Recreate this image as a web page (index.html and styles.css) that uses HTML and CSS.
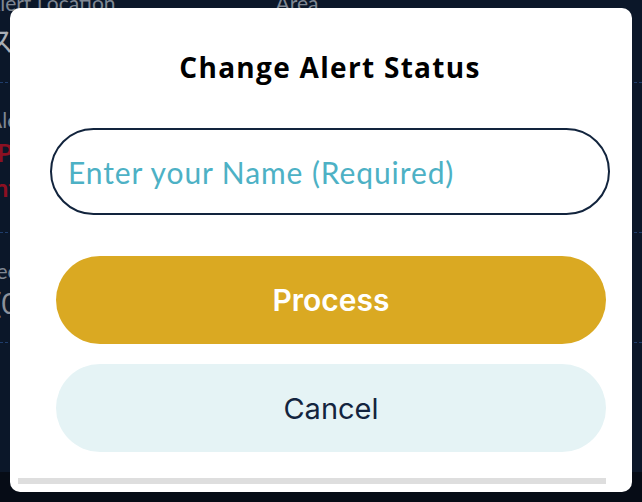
FILE: index.html
```html
<!DOCTYPE html>
<html lang="ja">
<head>
  <meta charset="UTF-8" />
  <title>Change Alert Status</title>
  <link rel="stylesheet" href="styles.css">
</head>
<body>
  <div class="page">
    <!-- DETAIL BEHIND THE DIALOG -->
    <div class="detail">
      <div class="row row-first">
        <div class="cols">
          <p class="label">Alert Location</p>
          <p class="label label-area">Area</p>
        </div>
        <p class="value">スーパー</p>
      </div>
      <div class="row row-status">
        <p class="label">Alert Status</p>
        <p class="value red">
          <span class="line">Processing</span>
          <span class="line line-two">Interrupted</span>
        </p>
      </div>
      <div class="row row-time">
        <p class="label">Received</p>
        <p class="value">(09:41)</p>
      </div>
    </div>
    <div class="tabbar"></div>
  </div>

  <!-- DIALOG -->
  <div class="modal">
    <div class="modal-body">
      <h2 class="modal-title">Change Alert Status</h2>
      <input type="text" class="name-input" placeholder="Enter your Name (Required)">
      <button class="btn btn-process">Process</button>
      <button class="btn btn-cancel">Cancel</button>
    </div>
    <div class="scrollbar"></div>
  </div>
</body>
</html>
```

FILE: styles.css
```css
body {
  margin: 0;
  background-color: #0b1729;
  font-family: Lato, "Noto Sans CJK JP", sans-serif;
  overflow: hidden;
}

.page {
  height: 502px;
  display: flex;
  flex-direction: column;
}

.detail {
  flex: 1;
}

.row {
  border-bottom: 1px dashed #1f3d6b;
}

.row-first {
  height: 82px;
}

.row-status {
  height: 149px;
}

.row-time {
  height: 109px;
}

.cols {
  display: flex;
}

.label {
  margin: 0 0 0 -14px;
  font-size: 21px;
  color: #7f8793;
  line-height: 22px;
}

.row-first .label {
  margin-top: -8px;
}

.label-area {
  margin-left: 160px;
}

.row-status .label {
  padding-top: 26px;
  margin-left: -12px;
}

.row-time .label {
  padding-top: 27px;
  margin-left: -16px;
}

.value {
  margin: 4px 0 0 -6px;
  font-size: 28px;
  line-height: 34px;
  color: #8b919b;
}

.row-first .value {
  margin-top: 10px;
  margin-left: -14px;
  color: #a9aeb6;
}

.red {
  margin-left: -3px;
  color: #8c1022;
  font-weight: bold;
  font-size: 25px;
  line-height: 35px;
}

.line {
  display: block;
}

.line-two {
  margin-left: -10px;
}

.tabbar {
  height: 30px;
  background-color: #060c16;
}

.modal {
  position: absolute;
  left: 10px;
  top: 8px;
  width: 622px;
  height: 484px;
  background-color: #fff;
  border-radius: 10px;
  display: flex;
  flex-direction: column;
}

.modal-body {
  flex: 1;
  display: flex;
  flex-direction: column;
  margin: 0 22px 0 40px;
}

.modal-title {
  margin: 44px 0 0;
  font-family: "Open Sans", sans-serif;
  font-size: 28px;
  line-height: 30px;
  font-weight: 700;
  letter-spacing: 1.3px;
  text-align: center;
  color: #000;
}

.name-input {
  margin-top: 46px;
  height: 87px;
  box-sizing: border-box;
  border: 2px solid #12243d;
  border-radius: 44px;
  padding: 0 16px;
  font-family: Lato, sans-serif;
  font-size: 30px;
  letter-spacing: 0.9px;
  outline: none;
}

.name-input::placeholder {
  color: #4db1c5;
}

.btn {
  height: 88px;
  border: none;
  border-radius: 44px;
  margin: 0 4px 0 6px;
  font-family: Inter, sans-serif;
  font-size: 29px;
}

.btn-process {
  margin-top: 41px;
  background-color: #daa922;
  color: #fff;
  font-weight: 600;
  font-size: 30px;
}

.btn-cancel {
  margin-top: 20px;
  background-color: #e5f3f5;
  color: #13243e;
}

.scrollbar {
  height: 6px;
  width: 588px;
  margin: 0 0 8px 8px;
  background-color: #dedede;
}
```
